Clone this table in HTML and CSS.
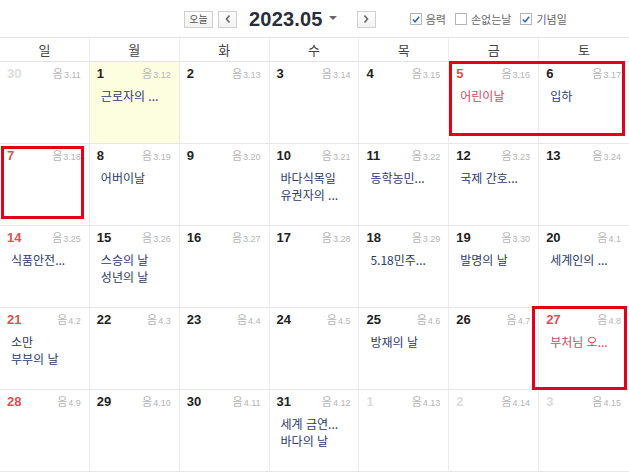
FILE: index.html
```html
<!DOCTYPE html>
<html lang="ko">
<head>
<meta charset="utf-8">
<link rel="stylesheet" href="styles.css">
</head>
<body>
<div class="toolbar">
  <button class="btn today">오늘</button>
  <button class="btn nav"><svg width="8" height="10" viewBox="0 0 8 10"><path d="M5.5 1.5 L2.5 5 L5.5 8.5" fill="none" stroke="#666" stroke-width="1.6"/></svg></button>
  <div class="title">2023.05<span class="caret"></span></div>
  <button class="btn nav"><svg width="8" height="10" viewBox="0 0 8 10"><path d="M2.5 1.5 L5.5 5 L2.5 8.5" fill="none" stroke="#666" stroke-width="1.6"/></svg></button>
  <div class="opts">
    <label class="opt"><span class="cb on"><svg width="11" height="11" viewBox="0 0 11 11"><path d="M2 5.5 L4.5 8 L9 2.5" fill="none" stroke="#2f6db5" stroke-width="1.8"/></svg></span>음력</label>
    <label class="opt"><span class="cb"></span>손없는날</label>
    <label class="opt"><span class="cb on"><svg width="11" height="11" viewBox="0 0 11 11"><path d="M2 5.5 L4.5 8 L9 2.5" fill="none" stroke="#2f6db5" stroke-width="1.8"/></svg></span>기념일</label>
  </div>
</div>

<div class="weekdays">
  <div>일</div><div>월</div><div>화</div><div>수</div><div>목</div><div>금</div><div>토</div>
</div>

<div class="weeks">
  <!-- row 1 -->
  <div class="cell"><div class="top"><span class="d other">30</span><span class="l">음<i>3.11</i></span></div></div>
  <div class="cell hl"><div class="top"><span class="d">1</span><span class="l">음<i>3.12</i></span></div><div class="ev">근로자의 ...</div></div>
  <div class="cell"><div class="top"><span class="d">2</span><span class="l">음<i>3.13</i></span></div></div>
  <div class="cell"><div class="top"><span class="d">3</span><span class="l">음<i>3.14</i></span></div></div>
  <div class="cell"><div class="top"><span class="d">4</span><span class="l">음<i>3.15</i></span></div></div>
  <div class="cell"><div class="top"><span class="d red">5</span><span class="l">음<i>3.16</i></span></div><div class="ev hol">어린이날</div></div>
  <div class="cell"><div class="top"><span class="d">6</span><span class="l">음<i>3.17</i></span></div><div class="ev">입하</div></div>
  <!-- row 2 -->
  <div class="cell"><div class="top"><span class="d red">7</span><span class="l">음<i>3.18</i></span></div></div>
  <div class="cell"><div class="top"><span class="d">8</span><span class="l">음<i>3.19</i></span></div><div class="ev">어버이날</div></div>
  <div class="cell"><div class="top"><span class="d">9</span><span class="l">음<i>3.20</i></span></div></div>
  <div class="cell"><div class="top"><span class="d">10</span><span class="l">음<i>3.21</i></span></div><div class="ev">바다식목일<br>유권자의 ...</div></div>
  <div class="cell"><div class="top"><span class="d">11</span><span class="l">음<i>3.22</i></span></div><div class="ev">동학농민...</div></div>
  <div class="cell"><div class="top"><span class="d">12</span><span class="l">음<i>3.23</i></span></div><div class="ev">국제 간호...</div></div>
  <div class="cell"><div class="top"><span class="d">13</span><span class="l">음<i>3.24</i></span></div></div>
  <!-- row 3 -->
  <div class="cell"><div class="top"><span class="d red">14</span><span class="l">음<i>3.25</i></span></div><div class="ev">식품안전...</div></div>
  <div class="cell"><div class="top"><span class="d">15</span><span class="l">음<i>3.26</i></span></div><div class="ev">스승의 날<br>성년의 날</div></div>
  <div class="cell"><div class="top"><span class="d">16</span><span class="l">음<i>3.27</i></span></div></div>
  <div class="cell"><div class="top"><span class="d">17</span><span class="l">음<i>3.28</i></span></div></div>
  <div class="cell"><div class="top"><span class="d">18</span><span class="l">음<i>3.29</i></span></div><div class="ev">5.18민주...</div></div>
  <div class="cell"><div class="top"><span class="d">19</span><span class="l">음<i>3.30</i></span></div><div class="ev">발명의 날</div></div>
  <div class="cell"><div class="top"><span class="d">20</span><span class="l">음<i>4.1</i></span></div><div class="ev">세계인의 ...</div></div>
  <!-- row 4 -->
  <div class="cell"><div class="top"><span class="d red">21</span><span class="l">음<i>4.2</i></span></div><div class="ev">소만<br>부부의 날</div></div>
  <div class="cell"><div class="top"><span class="d">22</span><span class="l">음<i>4.3</i></span></div></div>
  <div class="cell"><div class="top"><span class="d">23</span><span class="l">음<i>4.4</i></span></div></div>
  <div class="cell"><div class="top"><span class="d">24</span><span class="l">음<i>4.5</i></span></div></div>
  <div class="cell"><div class="top"><span class="d">25</span><span class="l">음<i>4.6</i></span></div><div class="ev">방재의 날</div></div>
  <div class="cell"><div class="top"><span class="d">26</span><span class="l">음<i>4.7</i></span></div></div>
  <div class="cell"><div class="top"><span class="d red">27</span><span class="l">음<i>4.8</i></span></div><div class="ev hol">부처님 오...</div></div>
  <!-- row 5 -->
  <div class="cell"><div class="top"><span class="d red">28</span><span class="l">음<i>4.9</i></span></div></div>
  <div class="cell"><div class="top"><span class="d">29</span><span class="l">음<i>4.10</i></span></div></div>
  <div class="cell"><div class="top"><span class="d">30</span><span class="l">음<i>4.11</i></span></div></div>
  <div class="cell"><div class="top"><span class="d">31</span><span class="l">음<i>4.12</i></span></div><div class="ev">세계 금연...<br>바다의 날</div></div>
  <div class="cell"><div class="top"><span class="d other">1</span><span class="l">음<i>4.13</i></span></div></div>
  <div class="cell"><div class="top"><span class="d other">2</span><span class="l">음<i>4.14</i></span></div></div>
  <div class="cell"><div class="top"><span class="d other">3</span><span class="l">음<i>4.15</i></span></div></div>
</div>

<div class="mark m1"></div>
<div class="mark m2"></div>
<div class="mark m3"></div>
</body>
</html>
```

FILE: styles.css
```css
* { box-sizing: border-box; }
html, body { margin: 0; padding: 0; background: #fff; }
body {
  width: 629px;
  height: 474px;
  position: relative;
  overflow: hidden;
  font-family: "Liberation Sans", "Noto Sans CJK KR", sans-serif;
  color: #333;
}

.toolbar {
  height: 37px;
  display: flex;
  align-items: center;
  padding-left: 184px;
  padding-top: 1px;
}
.btn {
  height: 17px;
  border: 1px solid #cfcfcf;
  background: linear-gradient(#fff, #f2f2f2);
  margin: 0;
  padding: 0;
  display: flex;
  align-items: center;
  justify-content: center;
  font-family: "Noto Sans CJK KR", sans-serif;
  font-size: 10px;
  color: #555;
  line-height: 1;
}
.today { width: 29px; }
.nav { width: 19px; margin-left: 5px; }
.title {
  margin-left: 12px;
  font-family: "Liberation Sans", sans-serif;
  font-weight: bold;
  font-size: 20px;
  color: #2a2d3c;
  letter-spacing: 0.2px;
  display: flex;
  align-items: center;
  margin-right: 15px;
}
.caret {
  width: 0;
  height: 0;
  border-left: 4px solid transparent;
  border-right: 4px solid transparent;
  border-top: 4px solid #666;
  margin-left: 6px;
  margin-top: -2px;
}
.opts {
  display: flex;
  align-items: center;
  margin-left: 34px;
  gap: 9px;
}
.opt {
  display: flex;
  align-items: center;
  font-family: "Noto Sans CJK KR", sans-serif;
  font-size: 11px;
  color: #666;
  line-height: 13px;
}
.cb {
  width: 12px;
  height: 12px;
  border: 1px solid #b5b5b5;
  background: #fff;
  margin-right: 4px;
  display: flex;
  align-items: center;
  justify-content: center;
}

.weekdays {
  display: grid;
  grid-template-columns: repeat(7, 1fr);
  border-top: 1px solid #e3e3e3;
  border-bottom: 1px solid #e3e3e3;
  height: 25px;
}
.weekdays div {
  text-align: center;
  font-family: "Noto Sans CJK KR", sans-serif;
  font-size: 13px;
  color: #444;
  line-height: 24px;
  border-right: 1px solid #ececec;
}
.weekdays div:last-child { border-right: none; }

.weeks {
  display: grid;
  grid-template-columns: repeat(7, 1fr);
  grid-auto-rows: 82px;
}
.cell {
  border-right: 1px solid #ececec;
  border-bottom: 1px solid #e6e6e6;
  padding-top: 3px;
  min-width: 0;
}
.cell:nth-child(7n) { border-right: none; }
.cell.hl { background: #fdfde0; }
.top {
  display: flex;
  justify-content: space-between;
  align-items: baseline;
  padding: 0 8px 0 7px;
  height: 17px;
  line-height: 17px;
}
.d {
  font-family: "Liberation Sans", sans-serif;
  font-weight: bold;
  font-size: 13px;
  color: #222;
}
.d.red { color: #d9534f; }
.d.other { color: #ddd; }
.l {
  font-family: "Noto Sans CJK KR", sans-serif;
  font-size: 11px;
  color: #b5b5b5;
}
.l i {
  font-style: normal;
  font-family: "Liberation Sans", sans-serif;
  font-size: 9px;
  margin-left: 1px;
}
.ev {
  margin-top: 5px;
  padding-left: 11px;
  font-family: "Noto Sans CJK KR", sans-serif;
  font-size: 12px;
  line-height: 17px;
  color: #2b3a6e;
  white-space: nowrap;
  overflow: hidden;
}
.ev.hol { color: #d2475c; }

.mark {
  position: absolute;
  border: 3px solid #e3001b;
  pointer-events: none;
}
.m1 { left: 449px; top: 61px; width: 176px; height: 75px; }
.m2 { left: 1px; top: 146px; width: 83px; height: 73px; }
.m3 { left: 532px; top: 306px; width: 95px; height: 84px; }
```
